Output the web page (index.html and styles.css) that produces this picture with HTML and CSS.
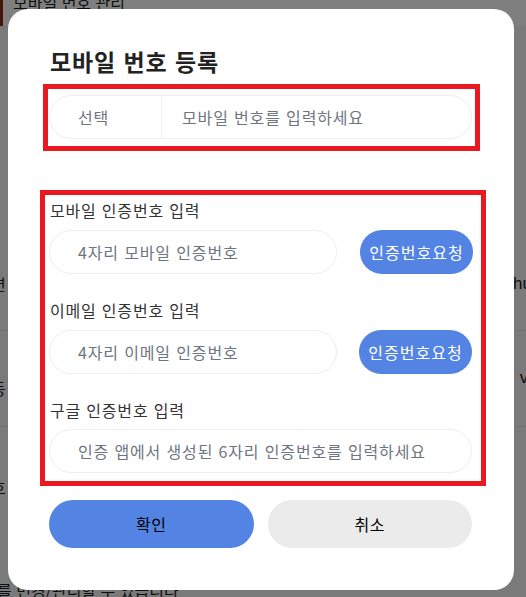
FILE: index.html
```html
<!DOCTYPE html>
<html lang="ko">
<head>
<meta charset="utf-8">
<title>모바일 번호 등록</title>
<link rel="stylesheet" href="styles.css">
</head>
<body>
<div class="page">
  <div class="page-top"><span class="page-top-text">모바일 번호 관리</span></div>
  <div class="page-row row-one"><span class="pl">변</span><span class="pr">hu</span></div>
  <div class="page-row row-two"><span class="pl">등</span><span class="pr pr-up">vi</span></div>
  <div class="page-row row-three"><span class="pl">호</span><span class="pr"></span></div>
  <div class="page-bottom">를 변경/관리할 수 있습니다</div>
</div>

<div class="overlay">
  <div class="modal">
    <h1 class="title">모바일 번호 등록</h1>

    <div class="box box-one">
      <div class="pill pill-split">
        <span class="select">선택</span>
        <span class="placeholder phone">모바일 번호를 입력하세요</span>
      </div>
    </div>

    <div class="box box-two">
      <div class="label">모바일 인증번호 입력</div>
      <div class="field-row">
        <div class="pill pill-short"><span class="placeholder">4자리 모바일 인증번호</span></div>
        <button class="req">인증번호요청</button>
      </div>

      <div class="label">이메일 인증번호 입력</div>
      <div class="field-row">
        <div class="pill pill-short"><span class="placeholder">4자리 이메일 인증번호</span></div>
        <button class="req">인증번호요청</button>
      </div>

      <div class="label">구글 인증번호 입력</div>
      <div class="pill pill-full"><span class="placeholder">인증 앱에서 생성된 6자리 인증번호를 입력하세요</span></div>
    </div>

    <div class="actions">
      <button class="btn btn-ok">확인</button>
      <button class="btn btn-cancel">취소</button>
    </div>
  </div>
</div>
</body>
</html>
```

FILE: styles.css
```css
* { box-sizing: border-box; }

html, body {
  margin: 0;
  padding: 0;
  width: 526px;
  height: 597px;
  overflow: hidden;
}

body {
  background: #f4f4f4;
  font-family: "Noto Sans CJK KR", "Noto Sans", sans-serif;
  color: #222222;
}

/* background page (under the dim overlay) */
.page {
  font-size: 16px;
  color: #1c1c1c;
}
.page-top {
  height: 32px;
  background: #ffffff;
  border-left: 3px solid #8a2a14;
  padding-left: 10px;
}
.page-top-text {
  display: block;
  line-height: 16px;
  margin-top: -6px;
}
.page-row {
  display: flex;
  justify-content: space-between;
  align-items: flex-end;
  border-bottom: 1px solid #e2e2e2;
}
.row-one { height: 305px; padding-bottom: 36px; }
.row-two { height: 96px; padding-bottom: 28px; }
.row-three { height: 96px; padding-bottom: 26px; border-bottom: 0; }
.pl { line-height: 20px; margin-left: -9px; }
.pr {
  font-family: "Liberation Sans", sans-serif;
  font-size: 17px;
  line-height: 20px;
  margin-right: -6px;
}
.pr-up { margin-bottom: 10px; }
.page-bottom { margin-left: -3px; padding-top: 57px; line-height: 20px; }

.overlay {
  position: fixed;
  inset: 0;
  background: rgba(0, 0, 0, 0.5);
  display: flex;
  align-items: flex-start;
  padding: 9px 0 0 8px;
}

.modal {
  width: 506px;
  height: 581px;
  background: #ffffff;
  border-radius: 20px;
  padding: 37px 42px 0 41px;
  display: flex;
  flex-direction: column;
}

.title {
  margin: 0 0 8px 1px;
  font-size: 23px;
  line-height: 30px;
  font-weight: 700;
  letter-spacing: 0.9px;
  color: #222222;
}

.box {
  border: 5px solid #e8191f;
}
.box-one {
  margin: 0 -8px 0 -6px;
  padding: 6px 3px 7px 1px;
}
.box-two {
  margin: 39px -14px 0 -9px;
  padding: 5px 8px 8px 4px;
}

.pill {
  height: 44px;
  border: 1px solid #eeeeee;
  border-radius: 22px;
  display: flex;
  align-items: center;
  padding-left: 28px;
  font-size: 16px;
  letter-spacing: 0.85px;
  white-space: nowrap;
}
.pill-split { padding-left: 0; }
.select {
  width: 112px;
  height: 100%;
  display: flex;
  align-items: center;
  padding-left: 28px;
  border-right: 1px solid #f0f0f0;
  color: #6d7580;
}
.placeholder { color: #6d7580; }
.phone { padding-left: 20px; }

.label {
  font-size: 16px;
  line-height: 20px;
  letter-spacing: 0.8px;
  color: #333333;
  margin-top: 26px;
  margin-bottom: 10px;
  margin-left: 1px;
}
.box-two .label:first-child { margin-top: 0; }

.field-row {
  display: flex;
  align-items: center;
  justify-content: space-between;
}
.pill-short { width: 288px; }
.pill-full { width: 423px; margin-top: -1px; }

.req {
  height: 44px;
  width: 113px;
  border: 0;
  border-radius: 22px;
  background: #5383e3;
  color: #ffffff;
  font-family: inherit;
  font-size: 16px;
  letter-spacing: 1px;
  padding: 0;
}
.field-row + .label + .field-row .req { margin-right: 1px; }

.actions {
  margin-top: 14px;
  display: flex;
  gap: 14px;
}
.btn {
  flex: 1;
  height: 48px;
  border: 0;
  border-radius: 24px;
  font-family: inherit;
  font-size: 16px;
  letter-spacing: 0.5px;
  color: #000000;
}
.btn-ok { background: #5383e3; }
.btn-cancel { background: #ebebeb; }
```
